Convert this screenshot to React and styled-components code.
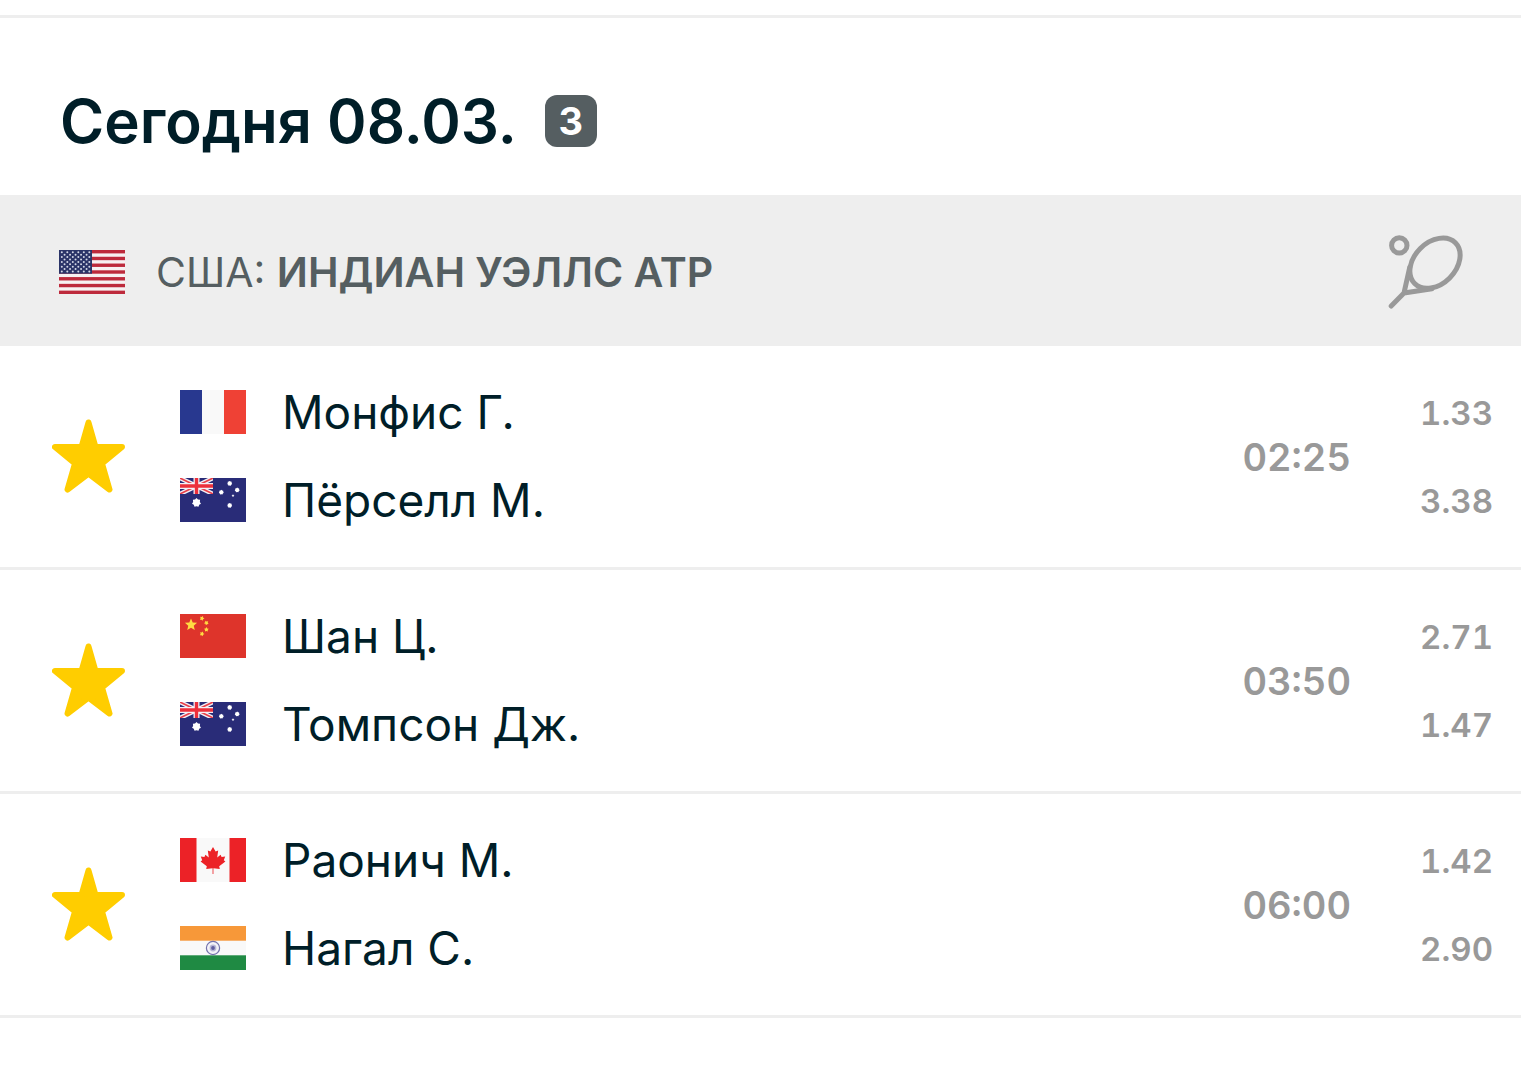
import { useState } from 'react';
import styled, { createGlobalStyle } from 'styled-components';

const matches = [
	{
		id: 1,
		time: '02:25',
		players: [
			{ name: 'Монфис Г.', country: 'fr', odds: '1.33' },
			{ name: 'Пёрселл М.', country: 'au', odds: '3.38' },
		],
	},
	{
		id: 2,
		time: '03:50',
		players: [
			{ name: 'Шан Ц.', country: 'cn', odds: '2.71' },
			{ name: 'Томпсон Дж.', country: 'au', odds: '1.47' },
		],
	},
	{
		id: 3,
		time: '06:00',
		players: [
			{ name: 'Раонич М.', country: 'ca', odds: '1.42' },
			{ name: 'Нагал С.', country: 'in', odds: '2.90' },
		],
	},
];

const App = () => {
	return (
		<>
			<GlobalStyle />
			<Page>
				<DayHeader>
					<DayTitle>Сегодня 08.03.</DayTitle>
					<Badge>{matches.length}</Badge>
				</DayHeader>
				<LeagueBar>
					<Flag country='us' />
					<LeagueName>
						США: <strong>ИНДИАН УЭЛЛС АТР</strong>
					</LeagueName>
					<TennisIcon />
				</LeagueBar>
				<MatchList>
					{matches.map((match) => (
						<Match key={match.id} match={match} />
					))}
				</MatchList>
			</Page>
		</>
	);
};

export default App;

const Match = ({ match }) => {
	const [favourite, setFavourite] = useState(true);

	return (
		<MatchRow>
			<StarButton
				type='button'
				aria-label='Избранное'
				aria-pressed={favourite}
				$active={favourite}
				onClick={() => setFavourite(!favourite)}
			>
				<svg width='74' height='76' viewBox='0 0 74 76'>
					<path d='M36.5 3.5 43.5 28H70L50 44.5 57.5 70.5 36.5 54.5 15.5 70.5 23 44.5 3 28H29.5Z' />
				</svg>
			</StarButton>
			<Players>
				{match.players.map((player) => (
					<Player key={player.name}>
						<Flag country={player.country} />
						<PlayerName>{player.name}</PlayerName>
					</Player>
				))}
			</Players>
			<Time>{match.time}</Time>
			<OddsColumn>
				{match.players.map((player) => (
					<Odds key={player.name}>{player.odds}</Odds>
				))}
			</OddsColumn>
		</MatchRow>
	);
};

/************************************************************* ICONS ****************************************************************************/

const TennisIcon = () => (
	<svg width='76' height='76' viewBox='0 0 76 76' fill='none' stroke='#999' strokeWidth='5' strokeLinecap='round' strokeLinejoin='round'>
		<circle cx='11.3' cy='11.4' r='7.7' />
		<ellipse cx='47' cy='29.2' rx='28.8' ry='20.8' transform='rotate(-45 47 29.2)' />
		<path d='M21.8 33 16 59 44 54.8M16 59 3.2 72' />
	</svg>
);

// star with n points as a list of polygon points
const starPoints = (cx, cy, r, turn = 0, n = 5, inner = 0.4) =>
	Array.from({ length: n * 2 }, (_, i) => {
		const radius = i % 2 ? r * inner : r;
		const angle = (Math.PI * i) / n - Math.PI / 2 + turn;
		return `${cx + radius * Math.cos(angle)},${cy + radius * Math.sin(angle)}`;
	}).join(' ');

const UsFlag = () => (
	<>
		<rect width='66' height='44' fill='#f7f1f2' />
		{[0, 1, 2, 3, 4, 5, 6].map((i) => (
			<rect key={i} y={i * 6.77} width='66' height='3.4' fill='#bd2a3c' />
		))}
		<rect width='33' height='23.7' fill='#2b3468' />
		{Array.from({ length: 9 }, (_, row) =>
			Array.from({ length: row % 2 ? 5 : 6 }, (_, col) => (
				<circle
					key={`${row}-${col}`}
					cx={2.8 + col * 5.5 + (row % 2 ? 2.75 : 0)}
					cy={2.3 + row * 2.4}
					r='1'
					fill='#d3d7e6'
				/>
			))
		)}
	</>
);

const FrFlag = () => (
	<>
		<rect width='66' height='44' fill='#f9f9f9' />
		<rect width='22' height='44' fill='#28388f' />
		<rect x='44' width='22' height='44' fill='#ef4135' />
	</>
);

const AuFlag = () => (
	<>
		<rect width='66' height='44' fill='#292c78' />
		<svg width='33' height='16' viewBox='0 0 33 16'>
			<path d='M0 0 33 16M33 0 0 16' stroke='#f4f0f6' strokeWidth='4.4' />
			<path d='M0 0 33 16M33 0 0 16' stroke='#e8404a' strokeWidth='1.6' />
			<path d='M16.5 0V16M0 8H33' stroke='#f4f0f6' strokeWidth='6' />
			<path d='M16.5 0V16M0 8H33' stroke='#ec2f3b' strokeWidth='3.4' />
		</svg>
		<polygon points={starPoints(16.5, 24.7, 4.6, 0, 7, 0.75)} fill='#fff' />
		<g fill='#fff'>
			<polygon points={starPoints(49.7, 5.4, 2.5, 0, 7, 0.8)} />
			<polygon points={starPoints(41.3, 14.3, 2.5, 0, 7, 0.8)} />
			<polygon points={starPoints(57.2, 12, 2.5, 0, 7, 0.8)} />
			<polygon points={starPoints(49.7, 27.4, 2.5, 0, 7, 0.8)} />
			<polygon points={starPoints(53, 17.6, 1.6)} />
		</g>
	</>
);

const CnFlag = () => (
	<>
		<rect width='66' height='44' fill='#de342b' />
		<g fill='#ffdc42'>
			<polygon points={starPoints(11, 10.8, 6.4, 0, 5, 0.45)} />
			<polygon points={starPoints(22, 4.4, 2.5, 0.4, 5, 0.55)} />
			<polygon points={starPoints(26.4, 8.9, 2.5, 0.8, 5, 0.55)} />
			<polygon points={starPoints(26.4, 15.6, 2.5, 0, 5, 0.55)} />
			<polygon points={starPoints(22, 19.9, 2.5, 0.4, 5, 0.55)} />
		</g>
	</>
);

const CaFlag = () => (
	<>
		<rect width='66' height='44' fill='#f9f9f9' />
		<rect width='16.5' height='44' fill='#ec2227' />
		<rect x='49.5' width='16.5' height='44' fill='#ec2227' />
		<path
			d='M33 9 35.6 13.4 38.2 12.4 37.2 19.6 40.6 16.8 41.6 19 45.2 18.4 43.8 22.2 45.4 23.4 39.2 28.2 39.8 31 33.4 30.2V36H32.6V30.2L26.2 31 26.8 28.2 20.6 23.4 22.2 22.2 20.8 18.4 24.4 19 25.4 16.8 28.8 19.6 27.8 12.4 30.4 13.4Z'
			fill='#ec2227'
		/>
	</>
);

const InFlag = () => (
	<>
		<rect width='66' height='44' fill='#f9f9f9' />
		<rect width='66' height='14.7' fill='#f79839' />
		<rect y='29.3' width='66' height='14.7' fill='#1f8a43' />
		<circle cx='33' cy='22' r='6.6' fill='#f3f2f8' stroke='#7472ac' strokeWidth='1.2' />
		<circle cx='33' cy='22' r='3.4' fill='#b9b8d6' />
		<circle cx='33' cy='22' r='1.9' fill='#5f5ca0' />
	</>
);

const flags = { us: UsFlag, fr: FrFlag, au: AuFlag, cn: CnFlag, ca: CaFlag, in: InFlag };

const Flag = ({ country }) => {
	const Drawing = flags[country];
	return (
		<FlagSvg viewBox='0 0 66 44' aria-hidden='true'>
			<Drawing />
		</FlagSvg>
	);
};

/************************************************************* STYLES ****************************************************************************/

const GlobalStyle = createGlobalStyle`
	* {
		box-sizing: border-box;
	}

	body {
		margin: 0;
		background-color: #fff;
		color: #001e28;
		font-family: Inter, 'Liberation Sans', sans-serif;
	}
`;

const Page = styled.main`
	width: 100%;
	padding-top: 15px;
`;

const DayHeader = styled.header`
	display: flex;
	align-items: center;
	gap: 28px;
	height: 180px;
	padding: 29px 60px 0;
	border-top: 3px solid #eee;
`;

const DayTitle = styled.h1`
	margin: 0;
	font-size: 60px;
	font-weight: 600;
	line-height: 72px;
`;

const Badge = styled.span`
	display: flex;
	align-items: center;
	justify-content: center;
	width: 52px;
	height: 52px;
	border-radius: 12px;
	background-color: #555e61;
	color: #fff;
	font-size: 38px;
	font-weight: 700;
	line-height: 52px;
`;

const LeagueBar = styled.section`
	display: flex;
	align-items: center;
	height: 151px;
	padding: 3px 57px 0 59px;
	background-color: #eee;
`;

const LeagueName = styled.h2`
	flex: 1;
	margin: 0 0 0 31px;
	color: #555e61;
	font-size: 41px;
	font-weight: 400;
	line-height: 48px;

	& > strong {
		font-weight: 600;
	}
`;

const MatchList = styled.ul`
	margin: 0;
	padding: 0;
	list-style: none;
`;

const MatchRow = styled.li`
	display: flex;
	align-items: center;
	height: 224px;
	padding: 0 28px 0 52px;
	border-bottom: 3px solid #eee;
`;

const StarButton = styled.button`
	display: flex;
	padding: 0;
	border: none;
	background: none;
	cursor: pointer;

	& path {
		fill: ${({ $active }) => ($active ? '#ffcd00' : 'none')};
		stroke: #ffcd00;
		stroke-width: 6px;
		stroke-linejoin: round;
	}
`;

const Players = styled.div`
	flex: 1;
	margin-left: 54px;
	padding-bottom: 2px;
`;

const Player = styled.div`
	display: flex;
	align-items: center;
	gap: 36px;
	height: 88px;
`;

const PlayerName = styled.span`
	font-size: 46px;
	line-height: 56px;
`;

const FlagSvg = styled.svg`
	flex: none;
	width: 66px;
	height: 44px;
`;

const Time = styled.time`
	color: #999;
	font-size: 38px;
	font-weight: 600;
	line-height: 48px;
	font-variant-numeric: tabular-nums;
`;

const OddsColumn = styled.div`
	width: 142px;
	text-align: right;
`;

const Odds = styled.div`
	color: #999;
	font-size: 33px;
	font-weight: 600;
	line-height: 88px;
	font-variant-numeric: tabular-nums;
`;
